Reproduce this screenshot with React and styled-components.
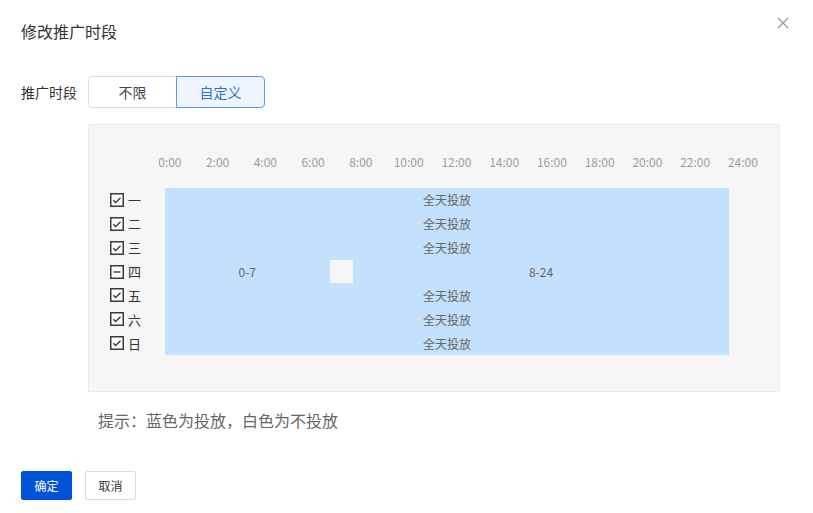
import React from "react";
import styled, { createGlobalStyle } from "styled-components";

const Global = createGlobalStyle`
  html, body { margin: 0; padding: 0; background: #fff; }
  body { font-family: "Noto Sans CJK SC", "Noto Sans", sans-serif; color: #333; }
`;

const Dialog = styled.div`
  padding: 20px 24px 0 21px;
  width: 813px;
  height: 513px;
  box-sizing: border-box;
`;

const Header = styled.div`
  display: flex;
  justify-content: space-between;
  align-items: flex-start;
`;

const Title = styled.div`
  font-size: 16px;
  line-height: 22px;
  color: #333;
`;

const CloseBtn = styled.button`
  margin-top: -3px;
  width: 12px;
  height: 12px;
  padding: 0;
  border: 0;
  background: none;
  display: flex;
  cursor: pointer;
`;

const FormRow = styled.div`
  display: flex;
  align-items: center;
  margin-top: 34px;
`;

const Label = styled.div`
  width: 67px;
  font-size: 14px;
  color: #333;
`;

const Segment = styled.div`
  display: flex;
`;

const SegBtn = styled.button`
  width: 89px;
  height: 32px;
  box-sizing: border-box;
  font-family: inherit;
  font-size: 14px;
  border: 1px solid ${(p) => (p.$active ? "#5b93ef" : "#dcdfe6")};
  background: ${(p) => (p.$active ? "#eef5ff" : "#fff")};
  color: ${(p) => (p.$active ? "#2f6fdc" : "#444")};
  border-radius: ${(p) => (p.$first ? "4px 0 0 4px" : "0 4px 4px 0")};
  margin-left: ${(p) => (p.$first ? "0" : "-1px")};
  position: relative;
  z-index: ${(p) => (p.$active ? 1 : 0)};
  padding: 0;
`;

const Panel = styled.div`
  margin: 16px 0 0 67px;
  width: 692px;
  height: 268px;
  box-sizing: border-box;
  background: #f6f6f6;
  border: 1px solid #ebebeb;
  padding: 28px 0 0 21px;
`;

const HourRow = styled.div`
  display: flex;
  margin-left: 36px;
`;

const Hour = styled.div`
  width: 47.75px;
  flex: none;
  text-align: center;
  font-size: 12px;
  line-height: 18px;
  color: #9d9d9d;
`;

const Body = styled.div`
  display: flex;
  margin-top: 17px;
`;

const DayCol = styled.div`
  width: 55px;
  display: flex;
  flex-direction: column;
`;

const Day = styled.div`
  height: 23.86px;
  display: flex;
  align-items: center;
  gap: 4px;
  font-size: 13px;
  color: #333;
`;

const Grid = styled.div`
  width: 564px;
  display: grid;
  grid-template-columns: repeat(24, 23.5px);
  grid-auto-rows: 23.86px;
`;

const Seg = styled.div`
  grid-column: span ${(p) => p.$span};
  background: ${(p) => (p.$on ? "#c3e0fd" : "transparent")};
  display: flex;
  align-items: center;
  justify-content: center;
  font-size: 12px;
  color: #666;
`;

const Hint = styled.div`
  margin: 17px 0 0 77px;
  font-size: 16px;
  line-height: 22px;
  color: #666;
`;

const Actions = styled.div`
  display: flex;
  gap: 13px;
  margin-top: 40px;
`;

const Btn = styled.button`
  width: 51px;
  height: 29px;
  box-sizing: border-box;
  padding: 0;
  font-family: inherit;
  font-size: 12px;
  border-radius: 2px;
  border: 1px solid ${(p) => (p.$primary ? "#0052d9" : "#dcdcdc")};
  background: ${(p) => (p.$primary ? "#0052d9" : "#fff")};
  color: ${(p) => (p.$primary ? "#fff" : "#333")};
`;

const Check = ({ partial }) => (
  <svg width="14" height="14" viewBox="0 0 14 14">
    <rect x="0.75" y="0.75" width="12.5" height="12.5" fill="#fff" stroke="#3a3a3a" strokeWidth="1.5" />
    {partial ? (
      <path d="M3.5 7h7" stroke="#3a3a3a" strokeWidth="1.4" />
    ) : (
      <path d="M3.3 7.2l2.4 2.3 4.8-4.7" fill="none" stroke="#3a3a3a" strokeWidth="1.4" />
    )}
  </svg>
);

const hours = ["0:00","2:00","4:00","6:00","8:00","10:00","12:00","14:00","16:00","18:00","20:00","22:00","24:00"];
const days = ["一","二","三","四","五","六","日"];

export default function App() {
  return (
    <>
      <Global />
      <Dialog>
        <Header>
          <Title>修改推广时段</Title>
          <CloseBtn aria-label="close">
            <svg width="12" height="12" viewBox="0 0 12 12">
              <path d="M1 1l10 10M11 1L1 11" stroke="#9a9ca3" strokeWidth="1.4" />
            </svg>
          </CloseBtn>
        </Header>
        <FormRow>
          <Label>推广时段</Label>
          <Segment>
            <SegBtn $first>不限</SegBtn>
            <SegBtn $active>自定义</SegBtn>
          </Segment>
        </FormRow>
        <Panel>
          <HourRow>
            {hours.map((h) => (
              <Hour key={h}>{h}</Hour>
            ))}
          </HourRow>
          <Body>
            <DayCol>
              {days.map((d) => (
                <Day key={d}>
                  <Check partial={d === "四"} />
                  {d}
                </Day>
              ))}
            </DayCol>
            <Grid>
              {days.map((d) =>
                d === "四" ? (
                  <React.Fragment key={d}>
                    <Seg $span={7} $on>0-7</Seg>
                    <Seg $span={1} />
                    <Seg $span={16} $on>8-24</Seg>
                  </React.Fragment>
                ) : (
                  <Seg key={d} $span={24} $on>全天投放</Seg>
                )
              )}
            </Grid>
          </Body>
        </Panel>
        <Hint>提示：蓝色为投放，白色为不投放</Hint>
        <Actions>
          <Btn $primary>确定</Btn>
          <Btn>取消</Btn>
        </Actions>
      </Dialog>
    </>
  );
}
